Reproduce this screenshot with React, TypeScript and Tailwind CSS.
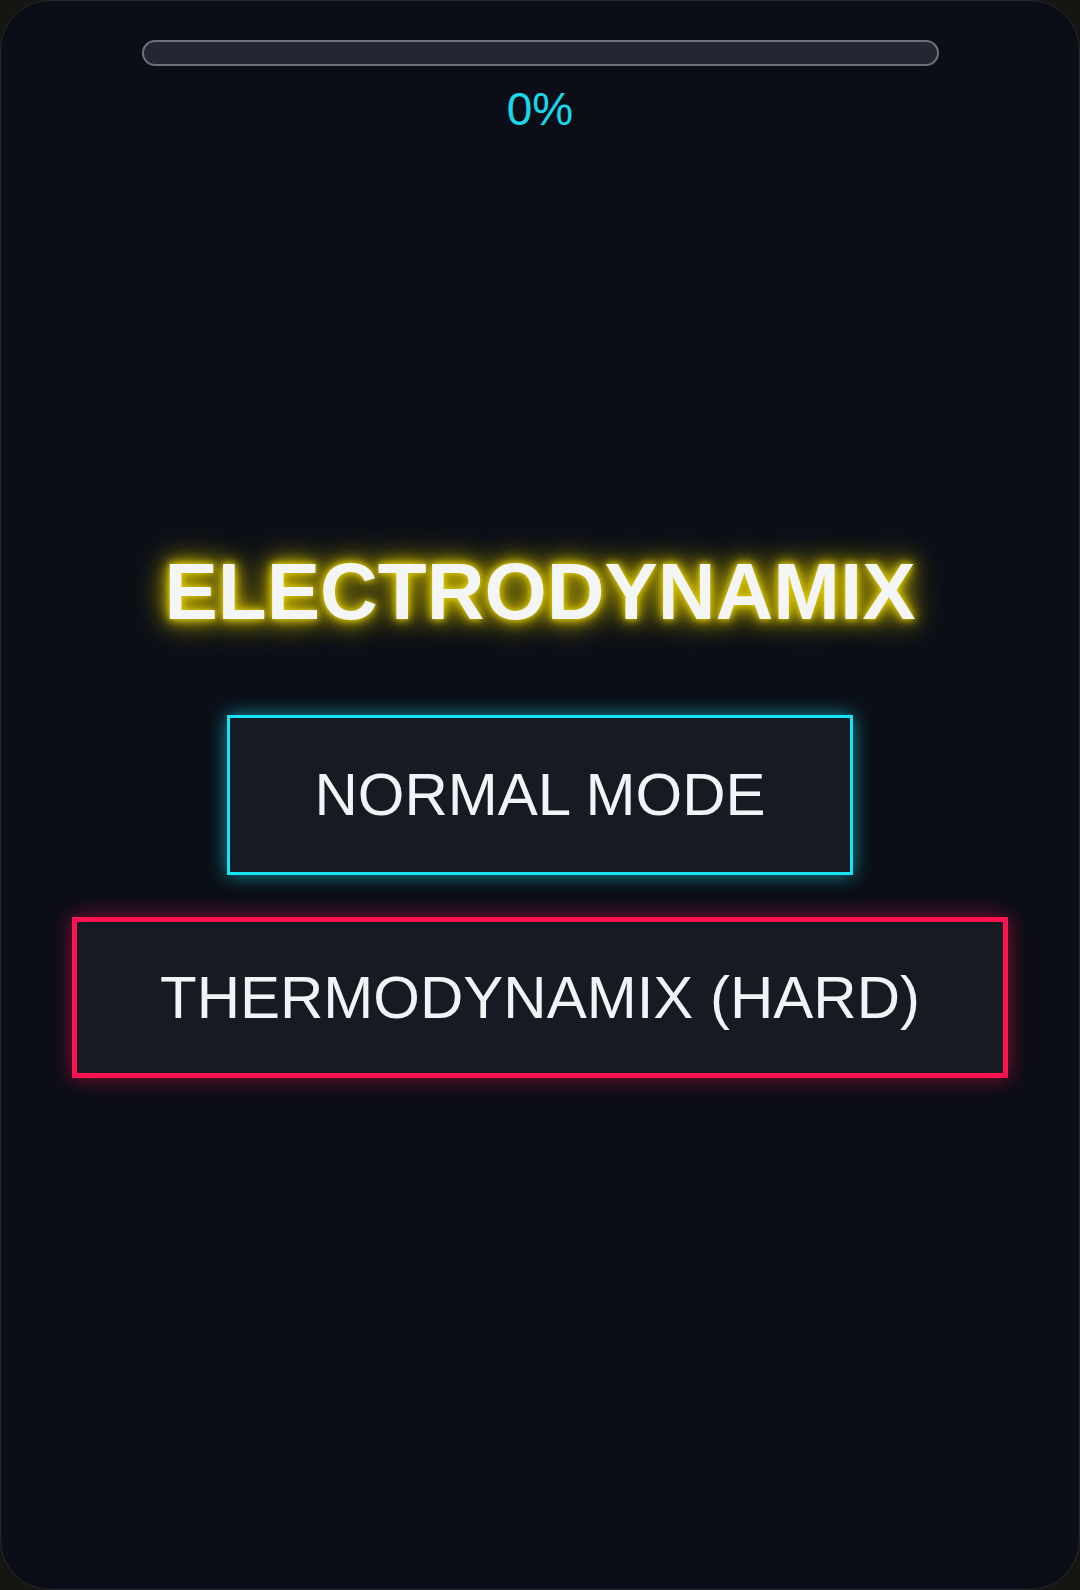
export default function App() {
  return (
    <div className="h-[1590px] w-[1080px] overflow-hidden bg-[#151512] font-['Liberation_Sans',Arial,sans-serif]">
      <div className="flex h-full w-full flex-col items-center rounded-[50px] border border-[#26282c] bg-[#0b0e17]">
        {/* progress */}
        <div className="mt-[39px] h-[26px] w-[797px] rounded-full border-2 border-[#6d717e] bg-[#232731]" />
        <p className="mt-[17px] text-[46px] leading-[1.15] text-[#1ad8ec]">0%</p>

        {/* title + modes */}
        <h1 className="mt-[410px] text-[80px] font-bold leading-[1.15] text-[#f4f5f7] [text-shadow:0_0_6px_#e6d200,0_0_14px_#d4c000,0_0_24px_#c2b000,0_0_36px_#8f8200]">
          ELECTRODYNAMIX
        </h1>
        <button className="mt-[77px] border-[3px] border-[#19e3f5] bg-[#161a23] px-[84px] pt-[42px] pb-[43px] text-[60px] leading-[1.15] text-[#f1f3f7] shadow-[0_0_18px_rgba(25,227,245,0.6)]">
          NORMAL MODE
        </button>
        <button className="mt-[42px] border-[5px] border-[#ff1252] bg-[#161a23] px-[83px] pt-[41px] pb-[41px] text-[60px] leading-[1.15] text-[#f1f3f7] shadow-[0_0_20px_rgba(255,18,82,0.5)]">
          THERMODYNAMIX (HARD)
        </button>
      </div>
    </div>
  );
}
